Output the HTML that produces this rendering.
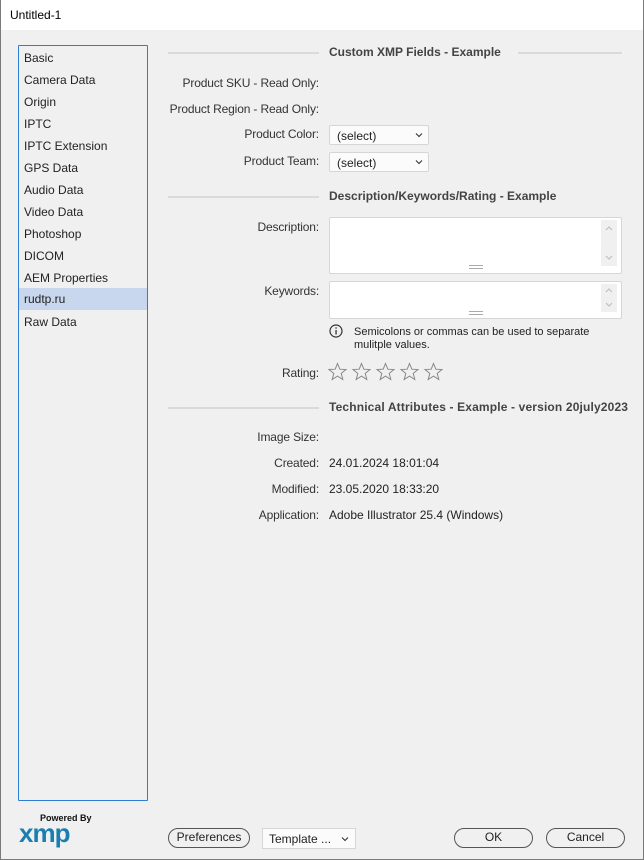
<!DOCTYPE html>
<html><head><style>
*{margin:0;padding:0;box-sizing:border-box}
body{width:644px;height:860px;background:#f0f0f0;font-family:"Liberation Sans",sans-serif;font-size:12px;color:#333;position:relative;overflow:hidden}
.a{position:absolute;white-space:nowrap}
.title{left:0;top:0;width:644px;height:30px;background:#fff;color:#000;font-size:12px;padding:8px 0 0 10px}
.frame{left:0;top:0;width:644px;height:860px;border:1px solid #7a7a7a;border-top:none}
.side{left:18px;top:45px;width:130px;height:756px;border:1px solid #2f7bd6;border-radius:1px}
.it{position:absolute;left:5px;height:22px;line-height:22px;width:124px;color:#222}
.sel{background:#c8d7ee;left:0;width:128px;padding-left:5px}
.lbl{text-align:right;width:150px;left:169px;color:#333;letter-spacing:-0.15px}
.hd{font-weight:bold;color:#444;left:329px}
.ln{height:2px;background:#dadada}
.selbox{left:329px;width:100px;height:20px;background:#fbfbfb;border:1px solid #d6d6d6;border-radius:2px;padding:3px 0 0 7px;color:#222}
.chev{position:absolute;right:5px;top:6px}
.ta{left:329px;width:293px;background:#fff;border:1px solid #d6d6d6;border-radius:2px}
.sb{position:absolute;right:4px;top:2px;width:16px;background:#f0f0f0}
.grip{position:absolute;left:139px;width:14px;height:4px;border-top:1px solid #aaa;border-bottom:1px solid #aaa}
.btn{height:20px;border:1.5px solid #555;border-radius:10px;text-align:center;line-height:17px;color:#222}
</style></head><body>
<div class="a title">Untitled-1</div>
<div class="a frame"></div>
<div class="a side">
<div class="it" style="top:1px">Basic</div>
<div class="it" style="top:23px">Camera Data</div>
<div class="it" style="top:45px">Origin</div>
<div class="it" style="top:67px">IPTC</div>
<div class="it" style="top:89px">IPTC Extension</div>
<div class="it" style="top:111px">GPS Data</div>
<div class="it" style="top:133px">Audio Data</div>
<div class="it" style="top:155px">Video Data</div>
<div class="it" style="top:177px">Photoshop</div>
<div class="it" style="top:199px">DICOM</div>
<div class="it" style="top:221px">AEM Properties</div>
<div class="it sel" style="top:242px">rudtp.ru</div>
<div class="it" style="top:265px">Raw Data</div>
</div>

<div class="a ln" style="left:168px;top:52px;width:151px"></div>
<div class="a hd" style="top:45px">Custom XMP Fields - Example</div>
<div class="a ln" style="left:518px;top:52px;width:104px"></div>
<div class="a lbl" style="top:76px">Product SKU - Read Only:</div>
<div class="a lbl" style="top:102px">Product Region - Read Only:</div>
<div class="a lbl" style="top:127px">Product Color:</div>
<div class="a selbox" style="top:125px">(select)<svg class="chev" width="8" height="6"><path d="M1 1.5 L4 4.5 L7 1.5" fill="none" stroke="#333" stroke-width="1.1"/></svg></div>
<div class="a lbl" style="top:154px">Product Team:</div>
<div class="a selbox" style="top:152px">(select)<svg class="chev" width="8" height="6"><path d="M1 1.5 L4 4.5 L7 1.5" fill="none" stroke="#333" stroke-width="1.1"/></svg></div>

<div class="a ln" style="left:168px;top:196px;width:151px"></div>
<div class="a hd" style="top:189px">Description/Keywords/Rating - Example</div>
<div class="a lbl" style="top:220px">Description:</div>
<div class="a ta" style="top:217px;height:57px"><div class="sb" style="height:46px"><svg width="16" height="46"><path d="M5 10 L8 7 L11 10 M5 36 L8 39 L11 36" fill="none" stroke="#bbb"/></svg></div><div class="grip" style="top:47px"></div></div>
<div class="a lbl" style="top:284px">Keywords:</div>
<div class="a ta" style="top:281px;height:38px"><div class="sb" style="height:28px"><svg width="16" height="28"><path d="M5 8 L8 5 L11 8 M5 19 L8 22 L11 19" fill="none" stroke="#bbb"/></svg></div><div class="grip" style="top:29px"></div></div>
<svg class="a" style="left:329px;top:324px" width="14" height="14"><circle cx="7" cy="7" r="6" fill="none" stroke="#333" stroke-width="1.2"/><rect x="6.4" y="6" width="1.3" height="4.5" fill="#333"/><rect x="6.4" y="3.3" width="1.3" height="1.4" fill="#333"/></svg>
<div class="a" style="left:354px;top:326px;font-size:11px;line-height:13px;color:#222">Semicolons or commas can be used to separate<br>mulitple values.</div>
<div class="a lbl" style="top:366px">Rating:</div>
<svg class="a" style="left:328px;top:362px" width="118" height="20">
<g fill="none" stroke="#888" stroke-width="1">
<path id="s" d="M9.5 1.5 L11.8 7.2 L18 7.5 L13.2 11.4 L14.8 17.5 L9.5 14.1 L4.2 17.5 L5.8 11.4 L1 7.5 L7.2 7.2 Z"/>
<use href="#s" x="24"/><use href="#s" x="48"/><use href="#s" x="72"/><use href="#s" x="96"/>
</g></svg>

<div class="a ln" style="left:168px;top:407px;width:151px"></div>
<div class="a hd" style="top:400px;width:303px;overflow:hidden;letter-spacing:0.15px">Technical Attributes - Example - version 20july2023</div>
<div class="a lbl" style="top:430px">Image Size:</div>
<div class="a lbl" style="top:456px">Created:</div>
<div class="a" style="left:329px;top:456px;color:#222">24.01.2024 18:01:04</div>
<div class="a lbl" style="top:482px">Modified:</div>
<div class="a" style="left:329px;top:482px;color:#222">23.05.2020 18:33:20</div>
<div class="a lbl" style="top:508px">Application:</div>
<div class="a" style="left:329px;top:508px;color:#222">Adobe Illustrator 25.4 (Windows)</div>

<div class="a" style="left:40px;top:813px;font-size:9px;font-weight:bold;color:#111">Powered By</div>
<div class="a" style="left:19px;top:818px;font-size:26px;font-weight:bold;color:#1a7fb0;letter-spacing:-1px">xmp</div>

<div class="a btn" style="left:168px;top:828px;width:82px">Preferences</div>
<div class="a" style="left:262px;top:828px;width:94px;height:21px;background:#fbfbfb;border:1px solid #d6d6d6;padding:3px 0 0 6px;color:#222">Template ... <svg style="position:absolute;right:6px;top:7px" width="8" height="6"><path d="M1 1.5 L4 4.5 L7 1.5" fill="none" stroke="#333" stroke-width="1.1"/></svg></div>
<div class="a btn" style="left:454px;top:828px;width:79px">OK</div>
<div class="a btn" style="left:546px;top:828px;width:79px">Cancel</div>
</body></html>
